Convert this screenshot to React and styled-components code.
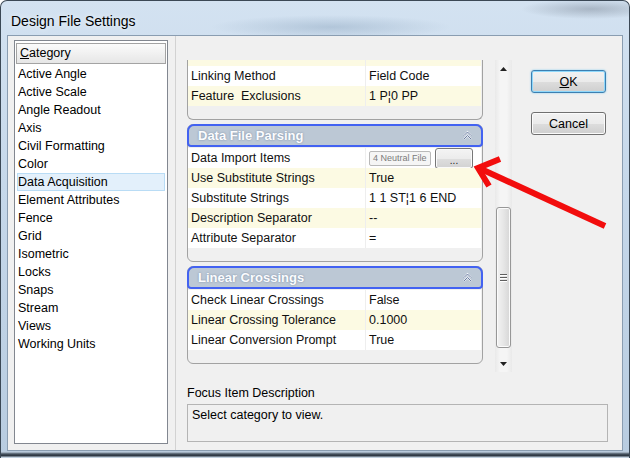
import React from "react";
import styled, { createGlobalStyle } from "styled-components";

const GlobalStyle = createGlobalStyle`
  html, body {
    margin: 0;
    padding: 0;
  }
  body {
    width: 630px;
    height: 458px;
    overflow: hidden;
    background: #fff;
    font-family: "Liberation Sans", Arial, sans-serif;
  }
`;

const Window = styled.div`
  position: relative;
  width: 630px;
  height: 458px;
  box-sizing: border-box;
  display: flex;
  flex-direction: column;
  border: 1px solid #3b4855;
  border-bottom: none;
  border-radius: 7px 7px 0 0;
  overflow: hidden;
  background: linear-gradient(
      to top,
      #c3d1df 0,
      #c3d1df 1px,
      #27313b 2px,
      #46525e 4px,
      #b9c9da 6px,
      transparent 8px
    ),
    linear-gradient(to bottom, #d3e2f1 0%, #c6d8ea 40%, #b8cce0 100%);
`;

const TitleBar = styled.div`
  height: 34px;
  box-sizing: border-box;
  display: flex;
  align-items: center;
  padding: 5px 0 0 10px;
  font-size: 14px;
  color: #000;
  text-shadow: 0 0 6px rgba(255, 255, 255, 0.9);
  background: radial-gradient(
      ellipse 120px 12px at 330px 26px,
      rgba(140, 165, 190, 0.45),
      transparent
    ),
    radial-gradient(
      ellipse 70px 10px at 590px 8px,
      rgba(90, 100, 115, 0.35),
      transparent
    );
`;

const Client = styled.div`
  flex: 1;
  display: flex;
  margin: 0 6px 7px 6px;
  background: #f0f0f0;
  border: 1px solid #8a9db1;
`;

const LeftPane = styled.div`
  width: 168px;
  box-sizing: border-box;
  display: flex;
  padding: 4px 7px 6px 6px;
  border-right: 1px solid #d2d2d2;
`;

const ListBox = styled.div`
  flex: 1;
  display: flex;
  flex-direction: column;
  background: #fff;
  border: 1px solid #828790;
  padding: 2px 1px 0 1px;
`;

const ListHeader = styled.div`
  height: 21px;
  box-sizing: border-box;
  border: 1px solid #a3a3a3;
  background: linear-gradient(to bottom, #fbfbfb, #e6e6e6);
  padding-left: 3px;
  font-size: 12.5px;
  line-height: 19px;
  color: #000;
  margin-bottom: 1px;

  u {
    text-decoration: underline;
  }
`;

const ListItem = styled.div`
  height: 18px;
  box-sizing: border-box;
  margin: 0 1px;
  border: 1px solid ${(p) => (p.$selected ? "#b9dcf5" : "transparent")};
  background: ${(p) => (p.$selected ? "#e3f0fb" : "transparent")};
  font-size: 12.5px;
  line-height: 16px;
  color: #000;
  white-space: nowrap;
`;

const RightPane = styled.div`
  flex: 1;
  display: flex;
  flex-direction: column;
  padding: 24px 0 0 11px;
`;

const TopRow = styled.div`
  display: flex;
  align-items: flex-start;
`;

const GridViewport = styled.div`
  width: 296px;
  height: 312px;
  overflow: hidden;
  display: flex;
  flex-direction: column;
  gap: 4px;
`;

const Group = styled.div`
  border: 1px solid #a2a2a2;
  border-radius: ${(p) => (p.$clipped ? "0 0 6px 6px" : "6px")};
  ${(p) => p.$clipped && "border-top: none;"}
  padding-bottom: 13px;
  background: #f0f0f0;
`;

const GroupHeader = styled.div`
  height: 23px;
  box-sizing: border-box;
  margin: -1px -1px 1px -1px;
  border: 2px solid #4262f2;
  border-radius: 7px 7px 4px 4px;
  background: #bcc8d5;
  display: flex;
  align-items: center;
  justify-content: space-between;
  padding: 0 8px 0 9px;
  color: #fbfcfe;
  font-weight: bold;
  font-size: 13px;
  text-shadow: 0 0 2px rgba(90, 110, 140, 0.7);
`;

const Row = styled.div`
  display: grid;
  grid-template-columns: 178px 1fr;
  height: ${(p) => p.$h || 20}px;
  margin-right: 1px;
  background: ${(p) => (p.$alt ? "#fcfae3" : "#ffffff")};
  font-size: 12.5px;
  line-height: 20px;
  color: #101010;
  white-space: nowrap;
  overflow: hidden;
`;

const NameCell = styled.div`
  padding-left: 3px;
  border-right: 1px solid #eeeeee;
`;

const ValueCell = styled.div`
  padding-left: 3px;
  display: flex;
  align-items: center;
  gap: 4px;
`;

const FileBox = styled.div`
  width: 62px;
  height: 15px;
  box-sizing: border-box;
  border: 1px solid #b9b9b9;
  border-radius: 2px;
  background: #f5f5f5;
  font-size: 9px;
  line-height: 13px;
  color: #7b7b7b;
  padding-left: 3px;
  overflow: hidden;
`;

const EllipsisButton = styled.div`
  width: 38px;
  height: 21px;
  box-sizing: border-box;
  border: 1px solid #777;
  border-radius: 3px;
  background: linear-gradient(to bottom, #f4f4f4 0%, #ececec 50%, #dedede 51%, #d2d2d2 100%);
  box-shadow: inset 0 0 0 1px #fafafa;
  font-size: 10px;
  line-height: 24px;
  text-align: center;
  color: #222;
`;

const Scrollbar = styled.div`
  width: 17px;
  height: 312px;
  margin-left: 12px;
  display: flex;
  flex-direction: column;
  background: linear-gradient(to right, #e9e9e9, #f5f5f5 30%, #f5f5f5 70%, #e9e9e9);
`;

const ArrowBtn = styled.div`
  height: 17px;
  display: flex;
  align-items: center;
  justify-content: center;
`;

const Track = styled.div`
  flex: 1;
  display: flex;
  flex-direction: column;
`;

const Thumb = styled.div`
  height: 141px;
  margin: 0 1px;
  box-sizing: border-box;
  border: 1px solid #979797;
  border-radius: 3px;
  background: linear-gradient(to right, #f3f3f3, #e6e6e6 50%, #d6d6d6);
  box-shadow: inset 0 0 0 1px #fbfbfb;
  display: flex;
  flex-direction: column;
  align-items: center;
  justify-content: center;
  gap: 2px;
`;

const Grip = styled.span`
  width: 7px;
  height: 1px;
  background: #5f5f5f;
  box-shadow: 0 1px 0 #fff;
`;

const ButtonColumn = styled.div`
  margin-left: 19px;
  margin-top: 10px;
  display: flex;
  flex-direction: column;
  gap: 19px;
`;

const DialogButton = styled.button`
  width: 75px;
  height: 23px;
  box-sizing: border-box;
  padding: 0;
  border: 1px solid ${(p) => (p.$default ? "#3c7fb1" : "#707070")};
  border-radius: 3px;
  background: linear-gradient(to bottom, #f2f2f2 0%, #ebebeb 50%, #dddddd 51%, #cfcfcf 100%);
  box-shadow: ${(p) =>
    p.$default
      ? "inset 0 0 0 1px #8fd8fb, 0 0 2px #7cc8ee"
      : "inset 0 0 0 1px #fbfbfb"};
  font-family: "Liberation Sans", Arial, sans-serif;
  font-size: 12.5px;
  color: #000;
`;

const Description = styled.div`
  margin-top: 14px;
  display: flex;
  flex-direction: column;
  gap: 3px;
`;

const DescLabel = styled.div`
  font-size: 12.5px;
  line-height: 15px;
  color: #000;
`;

const DescBox = styled.div`
  width: 421px;
  height: 38px;
  box-sizing: border-box;
  border: 1px solid #b4b4b4;
  padding: 3px 4px;
  font-size: 12.5px;
  line-height: 15px;
  color: #000;
`;

const Overlay = styled.svg`
  position: absolute;
  left: -1px;
  top: -1px;
  pointer-events: none;
`;

const Collapse = () => (
  <svg width="11" height="11" viewBox="0 0 11 11">
    <path d="M2 5.5 L5.5 2 L9 5.5 M2 9 L5.5 5.5 L9 9" fill="none" stroke="#f7f9fc" strokeWidth="1.6" />
    <path d="M2 5.5 L5.5 2 L9 5.5 M2 9 L5.5 5.5 L9 9" fill="none" stroke="#4a5f8c" strokeWidth="0.8" />
  </svg>
);

const categories = [
  "Active Angle",
  "Active Scale",
  "Angle Readout",
  "Axis",
  "Civil Formatting",
  "Color",
  "Data Acquisition",
  "Element Attributes",
  "Fence",
  "Grid",
  "Isometric",
  "Locks",
  "Snaps",
  "Stream",
  "Views",
  "Working Units",
];

const parsing = [
  ["Use Substitute Strings", "True"],
  ["Substitute Strings", "1 1 ST¦1 6 END"],
  ["Description Separator", "--"],
  ["Attribute Separator", "="],
];

const crossings = [
  ["Check Linear Crossings", "False"],
  ["Linear Crossing Tolerance", "0.1000"],
  ["Linear Conversion Prompt", "True"],
];

export default function App() {
  return (
    <>
      <GlobalStyle />
      <Window>
        <TitleBar>Design File Settings</TitleBar>
        <Client>
          <LeftPane>
            <ListBox>
              <ListHeader>
                <u>C</u>ategory
              </ListHeader>
              {categories.map((c) => (
                <ListItem key={c} $selected={c === "Data Acquisition"}>
                  {c}
                </ListItem>
              ))}
            </ListBox>
          </LeftPane>
          <RightPane>
            <TopRow>
              <GridViewport>
                <Group $clipped>
                  <Row $alt $h={6}>
                    <NameCell />
                    <ValueCell />
                  </Row>
                  <Row>
                    <NameCell>Linking Method</NameCell>
                    <ValueCell>Field Code</ValueCell>
                  </Row>
                  <Row $alt>
                    <NameCell>Feature&nbsp; Exclusions</NameCell>
                    <ValueCell>1 P¦0 PP</ValueCell>
                  </Row>
                </Group>
                <Group>
                  <GroupHeader>
                    Data File Parsing
                    <Collapse />
                  </GroupHeader>
                  <Row>
                    <NameCell>Data Import Items</NameCell>
                    <ValueCell>
                      <FileBox>4 Neutral File</FileBox>
                      <EllipsisButton>...</EllipsisButton>
                    </ValueCell>
                  </Row>
                  {parsing.map(([n, v], i) => (
                    <Row key={n} $alt={i % 2 === 0}>
                      <NameCell>{n}</NameCell>
                      <ValueCell>{v}</ValueCell>
                    </Row>
                  ))}
                </Group>
                <Group>
                  <GroupHeader>
                    Linear Crossings
                    <Collapse />
                  </GroupHeader>
                  {crossings.map(([n, v], i) => (
                    <Row key={n} $alt={i % 2 === 1}>
                      <NameCell>{n}</NameCell>
                      <ValueCell>{v}</ValueCell>
                    </Row>
                  ))}
                </Group>
              </GridViewport>
              <Scrollbar>
                <ArrowBtn>
                  <svg width="7" height="4" viewBox="0 0 7 4">
                    <path d="M0 4 L3.5 0 L7 4 Z" fill="#222" />
                  </svg>
                </ArrowBtn>
                <Track>
                  <Thumb style={{ marginTop: 130 }}>
                    <Grip />
                    <Grip />
                    <Grip />
                  </Thumb>
                </Track>
                <ArrowBtn>
                  <svg width="7" height="4" viewBox="0 0 7 4">
                    <path d="M0 0 L7 0 L3.5 4 Z" fill="#222" />
                  </svg>
                </ArrowBtn>
              </Scrollbar>
              <ButtonColumn>
                <DialogButton $default>
                  <u>O</u>K
                </DialogButton>
                <DialogButton>Cancel</DialogButton>
              </ButtonColumn>
            </TopRow>
            <Description>
              <DescLabel>Focus Item Description</DescLabel>
              <DescBox>Select category to view.</DescBox>
            </Description>
          </RightPane>
        </Client>
        <Overlay width="630" height="458" viewBox="0 0 630 458">
          <g fill="none" stroke="#f20d0d" strokeWidth="6" strokeLinejoin="miter">
            <path d="M605 226 L481 169" />
            <path d="M500 159 L478 168 L489 186" />
          </g>
        </Overlay>
      </Window>
    </>
  );
}
